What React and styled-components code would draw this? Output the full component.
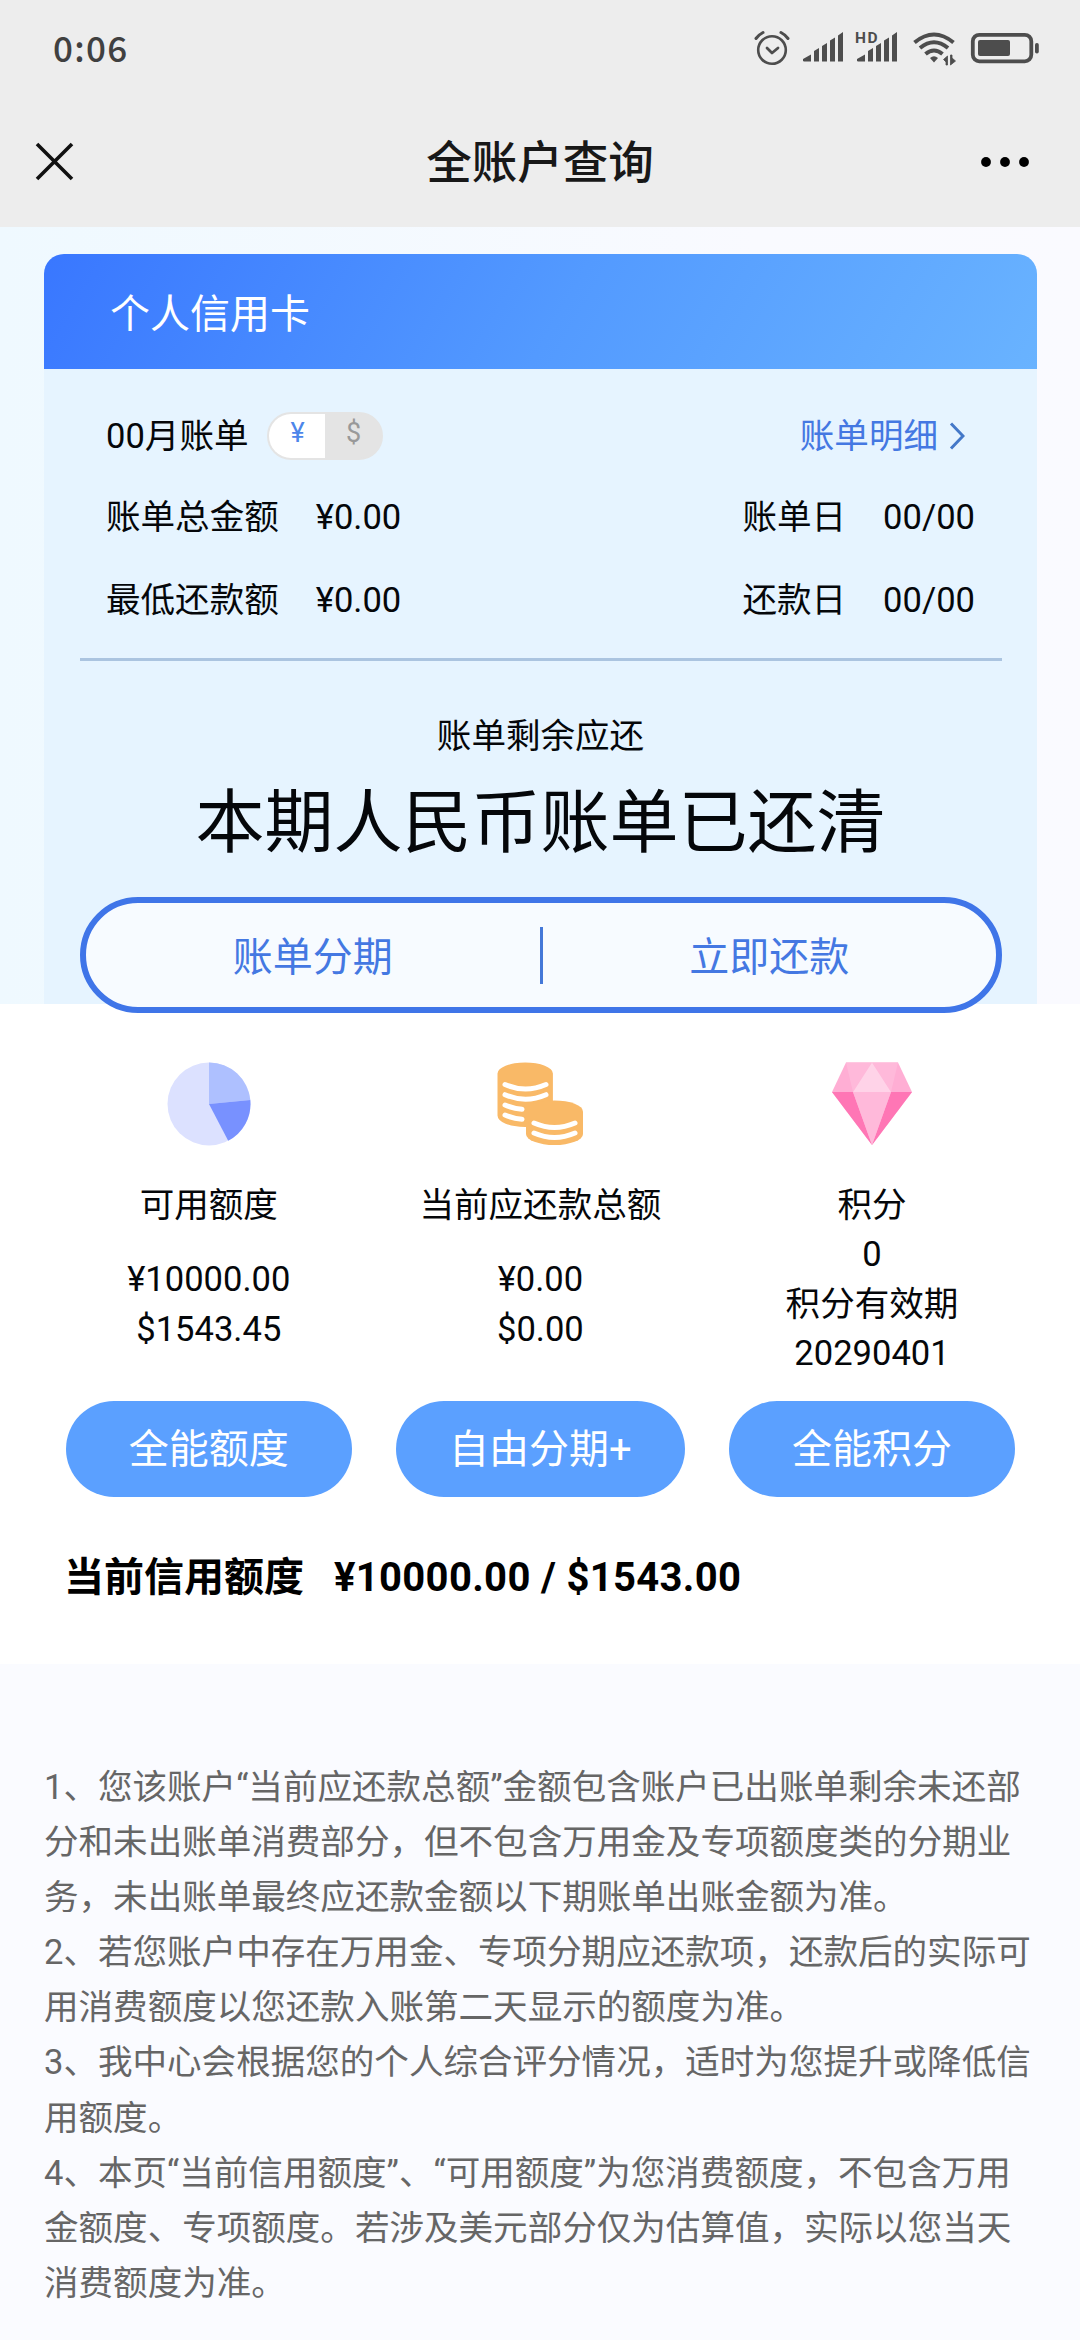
import React, { useState } from "react";
import styled, { createGlobalStyle } from "styled-components";

const GlobalStyle = createGlobalStyle`
  * {
    box-sizing: border-box;
  }
  body {
    margin: 0;
    background: #fafbff;
    font-family: Roboto, "Noto Sans CJK SC", sans-serif;
    color: #05070a;
  }
`;

const Page = styled.div`
  width: 1080px;
  height: 2340px;
  overflow: hidden;
  display: flex;
  flex-direction: column;
`;

const Header = styled.header`
  height: 227px;
  background: #ededed;
`;

const StatusBar = styled.div`
  height: 94px;
  padding: 0 41px 0 53px;
  display: flex;
  align-items: center;
  justify-content: space-between;
`;

const Time = styled.span`
  font-family: "Noto Sans CJK SC", sans-serif;
  font-size: 35px;
  font-weight: 500;
  letter-spacing: 1.3px;
  line-height: 92px;
  color: #404040;
`;

const NavBar = styled.div`
  height: 133px;
  padding: 2px 35px 0;
  display: grid;
  grid-template-columns: 1fr auto 1fr;
  align-items: center;
`;

const NavTitle = styled.h1`
  margin: 0;
  padding-top: 4px;
  font-size: 45.5px;
  font-weight: 500;
  line-height: 126px;
  color: #181818;
`;

const IconButton = styled.button`
  border: none;
  padding: 0;
  margin-right: ${(props) => props.$right || 0}px;
  background: none;
  display: flex;
  justify-self: ${(props) => props.$align || "start"};
  cursor: pointer;
`;

const Hero = styled.section`
  height: 777px;
  padding: 27px 43px 0 44px;
  background: linear-gradient(90deg, #eff9ff 0%, #f9faff 70%, #fafaff 100%);
`;

const Card = styled.div`
  height: 750px;
  border-radius: 20px 20px 0 0;
  background: #e6f4ff;
`;

const CardHead = styled.div`
  height: 115px;
  padding-left: 66px;
  border-radius: 20px 20px 0 0;
  background: linear-gradient(120deg, #3977ff 0%, #539aff 52%, #69b3ff 100%);
  color: #fff;
  font-size: 40px;
  line-height: 121px;
`;

const BillRow = styled.div`
  height: 83px;
  padding: 0 62px;
  display: flex;
  align-items: center;
  justify-content: space-between;
  font-size: 34.56px;
  line-height: 50px;
`;

const BillTop = styled(BillRow)`
  margin-top: 28px;
  height: 78px;
  padding-right: 72px;
`;

const Group = styled.div`
  display: flex;
  align-items: center;
  gap: ${(props) => props.$gap || 0}px;
`;

const Toggle = styled.div`
  width: 116px;
  height: 48px;
  border: 2px solid #e4e4e4;
  border-radius: 24px;
  background: #e4e4e4;
  display: flex;
  overflow: hidden;
`;

const Currency = styled.button`
  flex: 1;
  border: none;
  padding: 0 0 5px;
  background: ${(props) => (props.$active ? "#fff" : "#e4e4e4")};
  color: ${(props) => (props.$active ? "#4d86ea" : "#999")};
  font-family: inherit;
  font-size: 27px;
  line-height: 39px;
  cursor: pointer;
`;

const DetailLink = styled.a`
  display: flex;
  align-items: center;
  gap: 11px;
  color: #4478e2;
  cursor: pointer;
`;

const Divider = styled.div`
  height: 3px;
  margin: 17px 35px 0 36px;
  background: #abc4e0;
`;

const RemainLabel = styled.div`
  margin-top: 50px;
  text-align: center;
  font-size: 34.56px;
  line-height: 50px;
`;

const RemainText = styled.div`
  margin-top: 13px;
  height: 100px;
  text-align: center;
  font-size: 69px;
  line-height: 100px;
`;

/* hangs over the edge of the white section below */
const PayBar = styled.div`
  position: relative;
  margin: 23px 35px 0 36px;
  height: 116px;
  border: 6px solid #3f75e8;
  border-radius: 58px;
  background: #f7fbff;
  display: flex;
  align-items: center;
`;

const PayButton = styled.button`
  flex: 1;
  border: none;
  padding: 5px 0 0;
  background: none;
  color: #4478e2;
  font-family: inherit;
  font-size: 40px;
  line-height: 58px;
  cursor: pointer;
`;

const PaySplit = styled.span`
  width: 3px;
  height: 57px;
  background: #4478d8;
`;

const Summary = styled.section`
  height: 660px;
  padding: 58px 43px 0;
  background: #fff;
`;

const Columns = styled.div`
  display: grid;
  grid-template-columns: repeat(3, 331.6px);
`;

const Column = styled.div`
  height: 435px;
  display: flex;
  flex-direction: column;
  align-items: center;
  font-size: 34.56px;
  line-height: 49.3px;
`;

const ColumnLabel = styled.div`
  margin: 35px 0 ${(props) => (props.$tight ? 0 : 25)}px;
`;

const ActionButton = styled.button`
  width: ${(props) => props.$width || 286}px;
  height: 96px;
  margin-top: auto;
  border: none;
  border-radius: 48px;
  padding: 2px 0 0;
  background: #5ba0ff;
  color: #fff;
  font-family: inherit;
  font-size: 40px;
  line-height: 94px;
  cursor: pointer;
`;

const LimitRow = styled.div`
  margin-top: 52px;
  padding-left: 21px;
  display: flex;
  gap: 30px;
  font-size: 40px;
  font-weight: 700;
  line-height: 58px;
  color: #000;
`;

const LimitValue = styled.span`
  letter-spacing: 0.33px;
`;

const Notes = styled.section`
  padding: 96px 44px 0;
  font-size: 34.56px;
  line-height: 55.1px;
  color: #666;
`;

const Note = styled.p`
  margin: 0;
`;

const StatusIcons = () => (
  <svg width="290" height="42" viewBox="0 0 290 42" fill="#4d4d4d">
    {/* alarm */}
    <g fill="none" stroke="#4d4d4d" strokeLinecap="round">
      <circle cx="23" cy="24" r="13.8" strokeWidth="2.6" />
      <path d="M18 22l5 5 6-5" strokeWidth="2.8" strokeLinejoin="round" />
      <path d="M7 12.5q3-4 7-6M32 6.5q4 2 7 6" strokeWidth="3" />
    </g>
    {/* first sim */}
    <path d="M54 35v-2l8-4.500v7h-7zM65 25l5-3v13.500h-5zM73 20l5-3v18.500h-5zM81 14.500l5-3v24h-5zM89 9.500l5-3.500v29.500h-5z" />
    {/* second sim */}
    <text x="106" y="17" fontFamily="Roboto" fontSize="15.5" fontWeight="700" textLength="22.5">HD</text>
    <path d="M108 35v-2l8-4.500v7h-7zM119 25l5-3v13.500h-5zM127 20l5-3v18.500h-5zM135 14.500l5-3v24h-5zM143 9.500l5-3.500v29.500h-5z" />
    {/* wifi */}
    <g fill="none" stroke="#4d4d4d" strokeWidth="4">
      <path d="M165.500 16.500q19.500-16 39 0" />
      <path d="M171 22q14-11.500 28 0" />
      <path d="M176.500 28q8.500-7 17 0" />
    </g>
    <path d="M181 32q4-3.500 8 0l-4 4.500z" />
    <path d="M198.500 30v9h-1.500v-3l-2.500-2.500zM201.500 39v-10h1.500v3l3.500 3z" stroke="#4d4d4d" strokeWidth=".8" />
    {/* battery */}
    <rect x="223.8" y="8.8" width="58.5" height="26.5" rx="6.5" fill="none" stroke="#4d4d4d" strokeWidth="3.8" />
    <rect x="229" y="14" width="32" height="16" rx="2" />
    <rect x="286" y="17" width="3.8" height="10.5" rx="1.8" />
  </svg>
);

const CloseIcon = () => (
  <svg width="39" height="39" viewBox="0 0 39 39">
    <path d="M2 2l35 35M37 2L2 37" stroke="#111" strokeWidth="3.6" />
  </svg>
);

const MoreIcon = () => (
  <svg width="50" height="12" viewBox="0 0 50 12">
    <circle cx="6" cy="6" r="4.9" />
    <circle cx="25" cy="6" r="4.9" />
    <circle cx="44" cy="6" r="4.9" />
  </svg>
);

const ChevronIcon = () => (
  <svg width="16" height="28" viewBox="0 0 16 28">
    <path d="M2 1.500l12 12.500L2 26.500" fill="none" stroke="#4478c8" strokeWidth="3" />
  </svg>
);

const PieIcon = () => (
  <svg width="86" height="84" viewBox="0 0 86 84">
    <circle cx="43" cy="42" r="41.5" fill="#dce1ff" />
    <path d="M43 42V.5A41.500 41.500 0 0 1 84.300 38z" fill="#aec0ff" />
    <path d="M43 42l41.300-4A41.500 41.500 0 0 1 62.200 78.800z" fill="#7891ff" />
  </svg>
);

const CoinsIcon = () => (
  <svg width="86" height="84" viewBox="0 0 86 84">
    <path d="M.5 11.500a27.700 11 0 0 1 55.400 0v42a27.700 11.500 0 0 1-55.400 0z" fill="#f9b967" />
    <g fill="none" stroke="#fff" strokeWidth="5" strokeLinecap="round">
      <path d="M8 22.500q20.500 9 41 0M8 32.700q20.500 9 41 0" />
      <path d="M8 43q7.500 3.500 17 4.200M8 53q7.500 3.500 17 4.200" />
    </g>
    <path d="M29 49.500a28.500 11 0 0 1 57 0v22.500a28.500 11 0 0 1-57 0z" fill="#f9b967" />
    <g fill="none" stroke="#fff" strokeWidth="5" strokeLinecap="round">
      <path d="M37 61q20.500 9 41 0M37 71q20.500 9 41 0" />
    </g>
  </svg>
);

const GemIcon = () => (
  <svg width="80" height="84" viewBox="0 0 80 84">
    <path d="M14 .5h52L80 30 40 83 0 30z" fill="#ffaed4" />
    <path d="M14 .5h26L21 30z" fill="#ffb9da" />
    <path d="M66 .5H40L59 30z" fill="#ffb9da" />
    <path d="M40 .5L59 30H21z" fill="#ffd3e8" />
    <path d="M0 30h21l19 53z" fill="#ff76b5" />
    <path d="M80 30H59L40 83z" fill="#ff76b5" />
    <path d="M21 30h38L40 83z" fill="#ffb9da" />
  </svg>
);

const notes = [
  "1、您该账户“当前应还款总额”金额包含账户已出账单剩余未还部分和未出账单消费部分，但不包含万用金及专项额度类的分期业务，未出账单最终应还款金额以下期账单出账金额为准。",
  "2、若您账户中存在万用金、专项分期应还款项，还款后的实际可用消费额度以您还款入账第二天显示的额度为准。",
  "3、我中心会根据您的个人综合评分情况，适时为您提升或降低信用额度。",
  "4、本页“当前信用额度”、“可用额度”为您消费额度，不包含万用金额度、专项额度。若涉及美元部分仅为估算值，实际以您当天消费额度为准。",
];

const App = () => {
  const [currency, setCurrency] = useState("¥");

  return (
    <Page>
      <GlobalStyle />
      <Header>
        <StatusBar>
          <Time>0:06</Time>
          <StatusIcons />
        </StatusBar>
        <NavBar>
          <IconButton>
            <CloseIcon />
          </IconButton>
          <NavTitle>全账户查询</NavTitle>
          <IconButton $align="end" $right={15}>
            <MoreIcon />
          </IconButton>
        </NavBar>
      </Header>

      <Hero>
        <Card>
          <CardHead>个人信用卡</CardHead>
          <BillTop>
            <Group $gap={19}>
              <span>00月账单</span>
              <Toggle>
                {["¥", "$"].map((c) => (
                  <Currency key={c} $active={c === currency} onClick={() => setCurrency(c)}>
                    {c}
                  </Currency>
                ))}
              </Toggle>
            </Group>
            <DetailLink>
              账单明细
              <ChevronIcon />
            </DetailLink>
          </BillTop>
          <BillRow>
            <Group $gap={37}>
              <span>账单总金额</span>
              <span>¥0.00</span>
            </Group>
            <Group $gap={37}>
              <span>账单日</span>
              <span>00/00</span>
            </Group>
          </BillRow>
          <BillRow>
            <Group $gap={37}>
              <span>最低还款额</span>
              <span>¥0.00</span>
            </Group>
            <Group $gap={37}>
              <span>还款日</span>
              <span>00/00</span>
            </Group>
          </BillRow>
          <Divider />
          <RemainLabel>账单剩余应还</RemainLabel>
          <RemainText>本期人民币账单已还清</RemainText>
          <PayBar>
            <PayButton>账单分期</PayButton>
            <PaySplit />
            <PayButton>立即还款</PayButton>
          </PayBar>
        </Card>
      </Hero>

      <Summary>
        <Columns>
          <Column>
            <PieIcon />
            <ColumnLabel>可用额度</ColumnLabel>
            <span>¥10000.00</span>
            <span>$1543.45</span>
            <ActionButton>全能额度</ActionButton>
          </Column>
          <Column>
            <CoinsIcon />
            <ColumnLabel>当前应还款总额</ColumnLabel>
            <span>¥0.00</span>
            <span>$0.00</span>
            <ActionButton $width={289}>自由分期+</ActionButton>
          </Column>
          <Column>
            <GemIcon />
            <ColumnLabel $tight>积分</ColumnLabel>
            <span>0</span>
            <span>积分有效期</span>
            <span>20290401</span>
            <ActionButton>全能积分</ActionButton>
          </Column>
        </Columns>
        <LimitRow>
          <span>当前信用额度</span>
          <LimitValue>¥10000.00 / $1543.00</LimitValue>
        </LimitRow>
      </Summary>

      <Notes>
        {notes.map((note) => (
          <Note key={note}>{note}</Note>
        ))}
      </Notes>
    </Page>
  );
};

export default App;
